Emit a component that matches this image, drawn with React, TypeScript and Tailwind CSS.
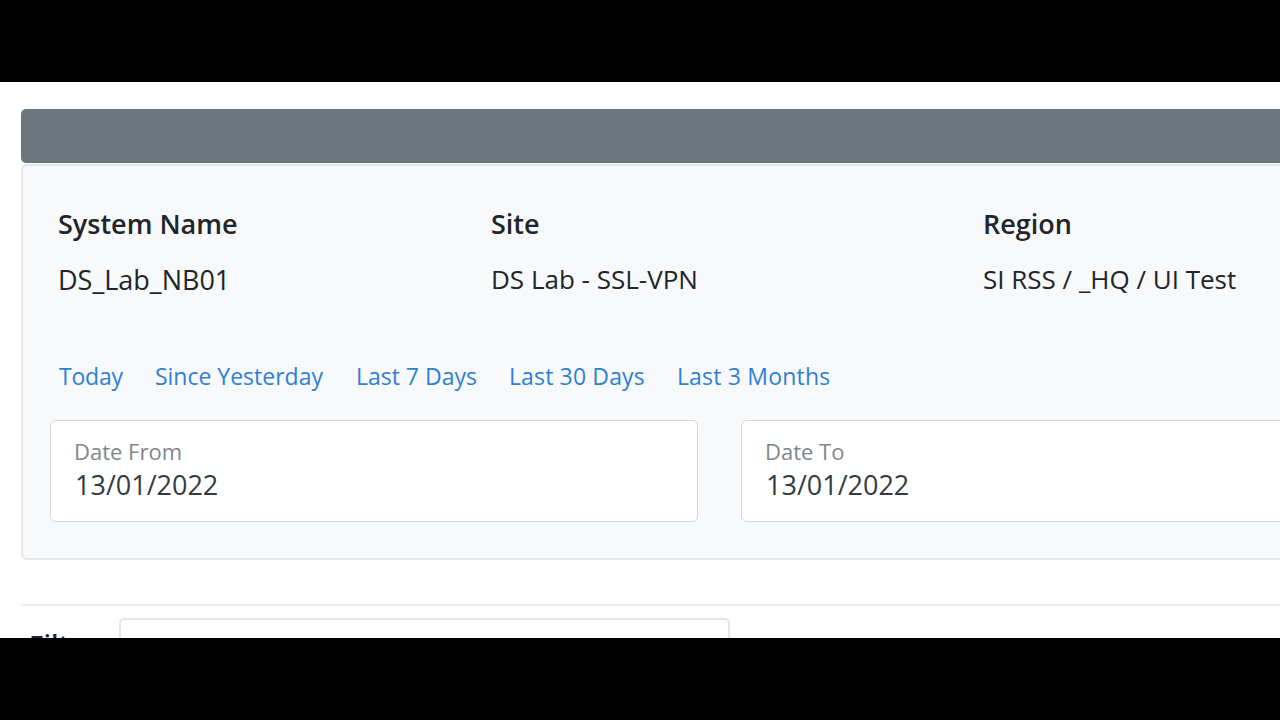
const dateBox = "h-[102px] w-[648px] rounded-[6px] border border-[#d3d6d9] bg-white pl-[23px] pt-[16px]";

export default function App() {
  return (
    <div className="h-[720px] w-[1280px] overflow-hidden bg-black font-['Open_Sans',sans-serif]">
      <div className="mt-[82px] h-[556px] overflow-hidden bg-white pl-[21px] pt-[27px]">
        <div className="w-[1400px]">
          <div className="h-[54px] rounded-[5px] bg-[#6b757c]" />
          <div className="mt-px h-[396px] rounded-[6px] border-2 border-[#e4e7e9] bg-[#f7f9fa] pl-[27px]">
            <div className="flex pl-[8px] pt-[41px] text-[27px] leading-[34px] text-[#212529]">
              <div className="w-[433px]">
                <div className="font-semibold">System Name</div>
                <div className="mt-[22px]">DS_Lab_NB01</div>
              </div>
              <div className="w-[492px]">
                <div className="font-semibold">Site</div>
                <div className="mt-[21px] text-[26px]">DS Lab - SSL-VPN</div>
              </div>
              <div>
                <div className="font-semibold">Region</div>
                <div className="mt-[21px] text-[26px]">SI RSS / _HQ / UI Test</div>
              </div>
            </div>
            <div className="mt-[63px] flex gap-[32px] pl-[9px] text-[23px] leading-[32px] text-[#2f7fd6]">
              <span className="tracking-[-0.2px]">Today</span>
              <span className="mr-px">Since Yesterday</span>
              <span>Last 7 Days</span>
              <span className="tracking-[0.15px]">Last 30 Days</span>
              <span className="tracking-[0.2px]">Last 3 Months</span>
            </div>
            <div className="mt-[28px] flex gap-[43px]">
              <div className={dateBox}>
                <div className="text-[22px] leading-[28px] text-[#80868b]">Date From</div>
                <div className="mt-[2px] pl-px text-[27px] leading-[36px] text-[#343a40]">13/01/2022</div>
              </div>
              <div className={dateBox}>
                <div className="text-[22px] leading-[28px] text-[#80868b]">Date To</div>
                <div className="mt-[2px] pl-px text-[27px] leading-[36px] text-[#343a40]">13/01/2022</div>
              </div>
            </div>
          </div>
          <div className="mt-[44px] flex border-t-2 border-[#eceef0] pt-[12px]">
            <div className="w-[98px] pl-[8px] pt-[11px] text-[27px] font-semibold leading-[32px] text-[#212529]">Filter</div>
            <div className="h-[60px] w-[611px] rounded-[5px] border-2 border-[#e2e4e6] bg-white" />
          </div>
        </div>
      </div>
    </div>
  );
}
